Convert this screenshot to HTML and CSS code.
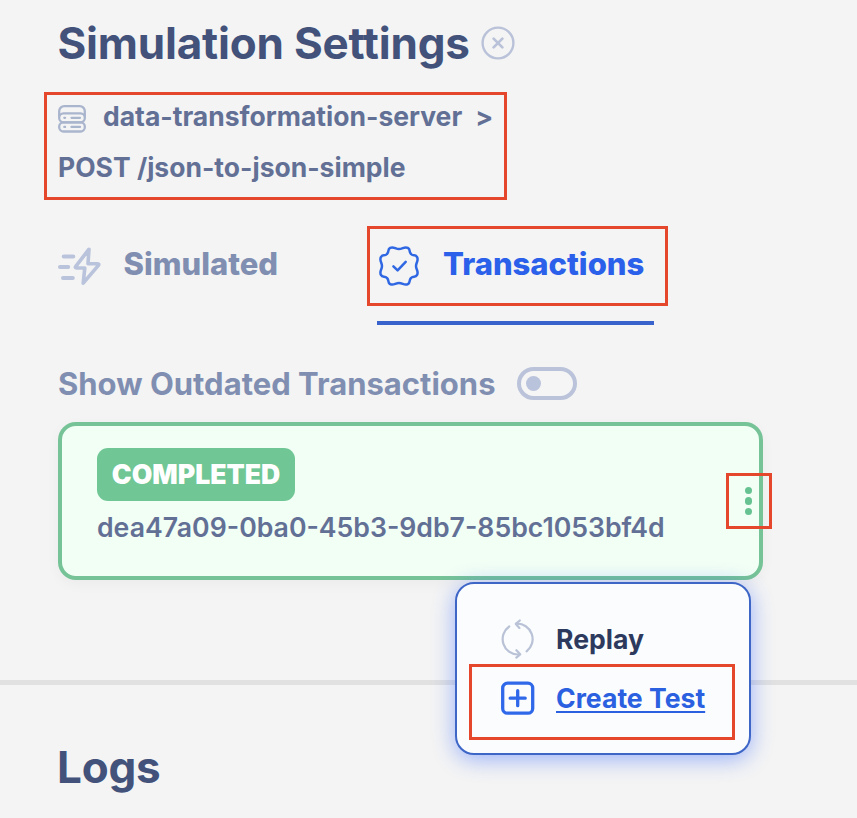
FILE: index.html
```html
<!DOCTYPE html>
<html lang="en">
<head>
<meta charset="utf-8">
<title>Simulation Settings</title>
<link rel="stylesheet" href="styles.css">
</head>
<body>
<main class="panel">
  <header class="head">
    <h1 class="title"><span class="t-title">Simulation Settings</span></h1>
    <svg class="close" width="34" height="34" viewBox="0 0 34 34"><circle cx="17" cy="17" r="15.4"/><path class="x" d="M12.6 12.6l8.8 8.8M21.4 12.6l-8.8 8.8"/></svg>
  </header>

  <section class="crumbs">
    <div class="crumb">
      <svg class="server" width="28" height="28" viewBox="0 0 28 28"><path d="M1.2 11V6.2a5 5 0 0 1 5-5h15.6a5 5 0 0 1 5 5V11"/><rect x="1.2" y="8.3" width="25.6" height="9" rx="4.3"/><rect x="1.2" y="17.3" width="25.6" height="9.2" rx="4.3"/><path d="M13.5 12.8h8.5M13.5 21.9h8.5M6.3 12.8h.8M6.3 21.9h.8"/></svg>
      <span class="raised">data-transformation-server</span><span class="gt raised">&gt;</span>
    </div>
    <div class="crumb"><span class="raised">POST /json-to-json-simple</span></div>
    <i class="mark mark-crumbs"></i>
  </section>

  <nav class="tabs">
    <div class="tab">
      <svg class="bolt" width="44" height="44" viewBox="0 0 44 44"><path class="thick" d="M5.7 12.4h9.6M2 23h8.2M5 34h9.8"/><path d="M31 5.2 17.8 22.3q-1.2 1.6.8 1.7h8.2L25.2 39.2 40.4 21.4q1.1-1.6-.9-1.7H30Z"/></svg>
      <span>Simulated</span>
    </div>
    <div class="tab active">
      <svg class="seal" width="42" height="42" viewBox="-21 -21 42 42"><path d="M0-17C3.6-17 5.6-19.9 8.8-18.1C11.9-16.4 9.5-14.4 12-12C14.4-9.5 16.4-11.9 18.1-8.8C19.9-5.6 17-3.6 17 0C17 3.6 19.9 5.6 18.1 8.8C16.4 11.9 14.4 9.5 12 12C9.5 14.4 11.9 16.4 8.8 18.1C5.6 19.9 3.6 17 0 17C-3.6 17-5.6 19.9-8.8 18.1C-11.9 16.4-9.5 14.4-12 12C-14.4 9.5-16.4 11.9-18.1 8.8C-19.9 5.6-17 3.6-17 0C-17-3.6-19.9-5.6-18.1-8.8C-16.4-11.9-14.4-9.5-12-12C-9.5-14.4-11.9-16.4-8.8-18.1C-5.6-19.9-3.6-17 0-17Z"/><path d="M-5.6.3-1.4 4.4 6.7-4.2"/></svg>
      <span>Transactions</span>
      <i class="mark mark-tab"></i>
    </div>
  </nav>

  <div class="filter">
    <span class="t-show">Show Outdated Transactions</span>
    <span class="toggle"><i class="knob"></i></span>
  </div>

  <article class="card">
    <div class="info">
      <span class="badge"><span class="raised">COMPLETED</span></span>
      <div class="uuid"><span class="raised">dea47a09-0ba0-45b3-9db7-85bc1053bf4d</span></div>
    </div>
    <div class="more"><i class="dot"></i><i class="dot"></i><i class="dot"></i></div>
    <i class="mark mark-more"></i>
    <div class="menu">
      <div class="item">
        <svg class="replay" width="34" height="40" viewBox="0 0 34 40"><path d="M8.2 7.5A15.4 15.4 0 0 0 17.2 35.5M25.6 32.3A15.4 15.4 0 0 0 15.5 4.7"/><path d="M18.8 1.5 14.8 4.9 18.4 8.9M15.4 31.2 19.2 35.3 15.3 38.6"/></svg>
        <span>Replay</span>
      </div>
      <a class="item create">
        <svg class="plus" width="34" height="34" viewBox="0 0 34 34"><rect x="1.7" y="2.2" width="30" height="30" rx="4.8"/><path d="M16.7 9.7v15M9.2 17.2h15"/></svg>
        <span>Create Test</span>
      </a>
      <i class="mark mark-create"></i>
    </div>
  </article>
</main>

<section class="logs"><h2 class="title"><span>Logs</span></h2></section>
</body>
</html>
```
FILE: styles.css
```css
* { box-sizing: border-box; }
body {
  margin: 0;
  width: 857px;
  height: 818px;
  overflow: hidden;
  background: #f4f4f4;
  font-family: Inter, "Liberation Sans", sans-serif;
  font-weight: 700;
  color: #627096;
}
svg { flex: none; fill: none; stroke-linecap: round; stroke-linejoin: round; }
span { white-space: nowrap; }
.raised { padding-bottom: 2px; }

.panel { height: 685px; padding: 0 94px 0 58px; border-bottom: 5px solid #e1e1e1; }
.title { margin: 0; font-size: 44px; font-weight: 700; line-height: 1; letter-spacing: -.2px; color: #43527a; }

.head { display: flex; align-items: center; height: 87px; margin-left: -.5px; }
.head .title { width: 423px; padding-bottom: 1px; }
.close { margin-bottom: 1px; stroke: #b9c2d9; stroke-width: 2.4; }
.close .x { stroke-width: 2.7; }

.crumbs { position: relative; height: 130px; padding-top: 4px; font-size: 26.5px; }
.crumb { display: flex; align-items: center; height: 51px; }
.server { margin: 5px 17px 0 0; stroke: #a9b4cd; stroke-width: 2.3; }
.gt { margin-left: 13px; }

.tabs { display: flex; height: 108px; }
.tab { display: flex; align-items: center; width: 319px; height: 92px; font-size: 31px; font-weight: 800; color: #808fb1; }
.bolt { margin: 5px 22px 0 -.5px; stroke: #bac3dc; stroke-width: 3.6; }
.bolt .thick { stroke-width: 4; }
.active { position: relative; width: 277px; height: 108px; padding-bottom: 12px; border-bottom: 4px solid #3863cc; color: #2b60ea; }
.seal { margin: 5px 23px 0 1px; stroke: #3068e3; stroke-width: 2.5; }

.filter { display: flex; align-items: center; height: 97px; padding-top: 20px; font-size: 31px; color: #808fb1; }
.t-show { width: 437px; }
.toggle { display: flex; align-items: center; width: 60px; height: 33px; margin-left: 22px; padding-left: 5px; border: 4px solid #bac3da; border-radius: 17px; background: #f5f5f6; }
.knob { width: 15px; height: 15px; border-radius: 50%; background: #bac3dc; }

.card { position: relative; display: flex; justify-content: space-between; align-items: center; height: 158px; padding: 0 7px 0 35px; border: 4px solid #76c397; border-radius: 18px; background: #f2fff5; box-shadow: 0 4px 14px rgba(0, 0, 0, .04); }
.info { height: 106px; }
.badge { display: flex; align-items: center; justify-content: center; width: 198px; height: 53px; border-radius: 11px; background: #70c795; font-size: 26.6px; font-weight: 900; color: #fff; }
.uuid { display: flex; align-items: center; height: 53px; font-size: 26.65px; font-weight: 600; }
.more { display: flex; flex-direction: column; gap: 3.2px; }
.dot { width: 7.2px; height: 7.2px; border-radius: 50%; background: #66c391; }

.menu { position: absolute; left: 393px; top: 156px; width: 296px; height: 173px; padding: 25px 0 0 44px; border: 2px solid #3e66c7; border-radius: 19px; background: #fafcfe; box-shadow: 0 4px 22px rgba(43, 96, 255, .46); font-size: 26.6px; color: #2d3a5e; }
.item { display: flex; align-items: center; gap: 21px; height: 59px; }
.replay { stroke: #b9c2d6; stroke-width: 2.2; }
.create { color: #2b60e0; text-decoration: underline; text-decoration-thickness: 2px; text-underline-offset: 3px; }
.plus { stroke: #3068ea; stroke-width: 3.3; }

.mark { position: absolute; border: 3px solid #e5472c; }
.mark-crumbs { left: -14px; top: 5px; width: 463px; height: 108px; }
.mark-tab { left: -10px; top: 9px; width: 301px; height: 80px; }
.mark-more { left: 664px; top: 47px; width: 46px; height: 56px; }
.mark-create { left: 12px; top: 80px; width: 266px; height: 76px; }

.logs { display: flex; align-items: center; height: 133px; padding: 30px 58px 0 57px; }
```
